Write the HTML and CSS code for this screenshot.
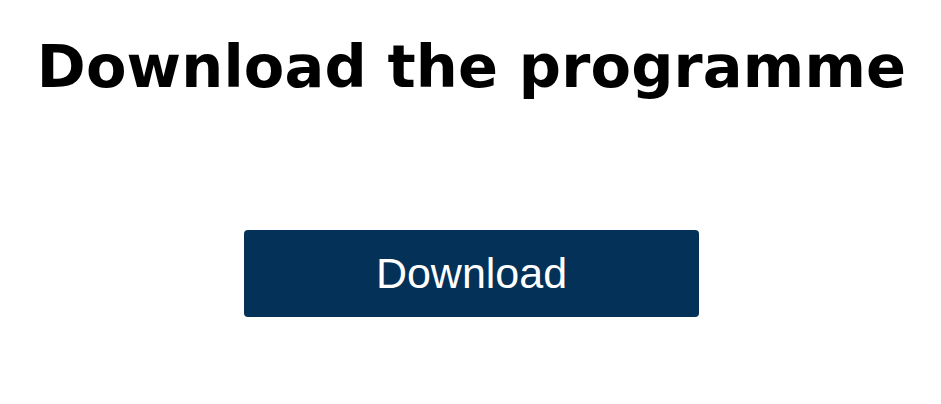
FILE: index.html
```html
<!DOCTYPE html>
<html lang="en">
<head>
<meta charset="utf-8">
<title>Download the programme</title>
<link rel="stylesheet" href="styles.css">
</head>
<body>
<main class="page">
  <h1 class="title">Download the programme</h1>
  <a class="btn" href="#">Download</a>
</main>
</body>
</html>
```

FILE: styles.css
```css
html, body {
  margin: 0;
  padding: 0;
  background: #ffffff;
}
.page {
  display: flex;
  flex-direction: column;
  align-items: center;
  padding-top: 31px;
  padding-left: 2px;
}
.title {
  margin: 0;
  font-family: "DejaVu Sans", sans-serif;
  font-weight: bold;
  font-size: 59px;
  letter-spacing: 0.15px;
  line-height: 72px;
  color: #000000;
  white-space: nowrap;
}
.btn {
  margin-top: 127px;
  width: 455px;
  height: 87px;
  display: flex;
  align-items: center;
  justify-content: center;
  background: #043158;
  border-radius: 4px;
  color: #ffffff;
  font-family: "Liberation Sans", Arial, sans-serif;
  font-size: 43px;
  text-decoration: none;
}
```
